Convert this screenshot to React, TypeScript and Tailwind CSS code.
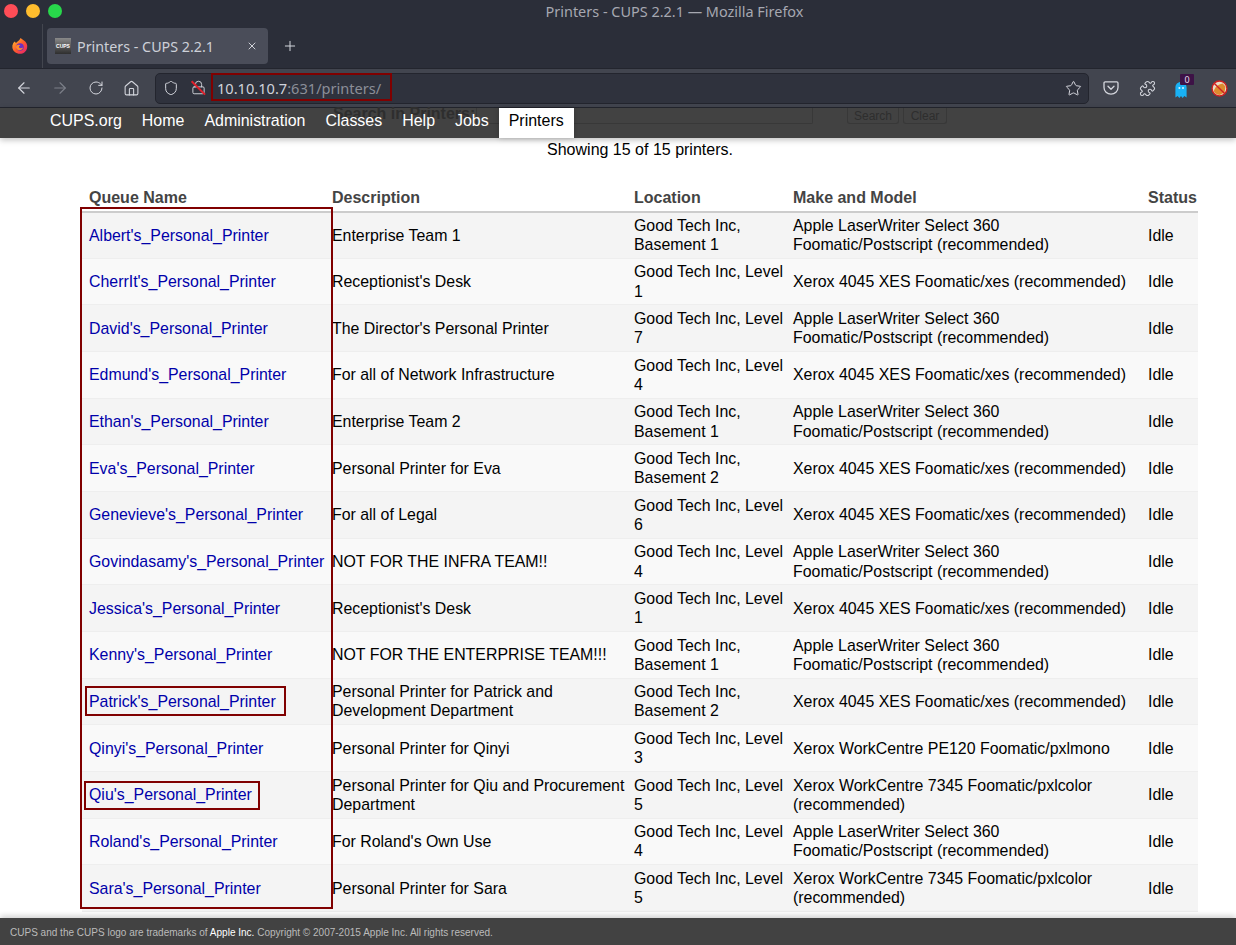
import React from "react"
import { ArrowLeft, ArrowRight, Home, Lock, Plus, Puzzle, RotateCw, Shield, Star, X } from "lucide-react"

type Printer = {
  name: string
  description: string
  location: string
  model: string
}

const APPLE = "Apple LaserWriter Select 360 Foomatic/Postscript (recommended)"
const XEROX = "Xerox 4045 XES Foomatic/xes (recommended)"
const WC7345 = "Xerox WorkCentre 7345 Foomatic/pxlcolor (recommended)"

const printers: Printer[] = [
  { name: "Albert's_Personal_Printer", description: "Enterprise Team 1", location: "Good Tech Inc, Basement 1", model: APPLE },
  { name: "CherrIt's_Personal_Printer", description: "Receptionist's Desk", location: "Good Tech Inc, Level 1", model: XEROX },
  { name: "David's_Personal_Printer", description: "The Director's Personal Printer", location: "Good Tech Inc, Level 7", model: APPLE },
  { name: "Edmund's_Personal_Printer", description: "For all of Network Infrastructure", location: "Good Tech Inc, Level 4", model: XEROX },
  { name: "Ethan's_Personal_Printer", description: "Enterprise Team 2", location: "Good Tech Inc, Basement 1", model: APPLE },
  { name: "Eva's_Personal_Printer", description: "Personal Printer for Eva", location: "Good Tech Inc, Basement 2", model: XEROX },
  { name: "Genevieve's_Personal_Printer", description: "For all of Legal", location: "Good Tech Inc, Level 6", model: XEROX },
  { name: "Govindasamy's_Personal_Printer", description: "NOT FOR THE INFRA TEAM!!", location: "Good Tech Inc, Level 4", model: APPLE },
  { name: "Jessica's_Personal_Printer", description: "Receptionist's Desk", location: "Good Tech Inc, Level 1", model: XEROX },
  { name: "Kenny's_Personal_Printer", description: "NOT FOR THE ENTERPRISE TEAM!!!", location: "Good Tech Inc, Basement 1", model: APPLE },
  { name: "Patrick's_Personal_Printer", description: "Personal Printer for Patrick and Development Department", location: "Good Tech Inc, Basement 2", model: XEROX },
  { name: "Qinyi's_Personal_Printer", description: "Personal Printer for Qinyi", location: "Good Tech Inc, Level 3", model: "Xerox WorkCentre PE120 Foomatic/pxlmono" },
  { name: "Qiu's_Personal_Printer", description: "Personal Printer for Qiu and Procurement Department", location: "Good Tech Inc, Level 5", model: WC7345 },
  { name: "Roland's_Personal_Printer", description: "For Roland's Own Use", location: "Good Tech Inc, Level 4", model: APPLE },
  { name: "Sara's_Personal_Printer", description: "Personal Printer for Sara", location: "Good Tech Inc, Level 5", model: WC7345 },
]

const navItems = ["CUPS.org", "Home", "Administration", "Classes", "Help", "Jobs"]

const FirefoxLogo = () => (
  <svg width="18" height="18" viewBox="0 0 18 18">
    <defs>
      <linearGradient id="ff" x1="0" y1="0" x2="1" y2="1">
        <stop offset="0" stopColor="#ffcb2e" />
        <stop offset="0.5" stopColor="#ff5a2c" />
        <stop offset="1" stopColor="#e3197a" />
      </linearGradient>
    </defs>
    <path d="M9.5 1C11 2.6 14.2 3.6 15.6 6.4 17 9.4 16.2 13 13.6 15.2 11 17.4 6.6 17.4 3.8 15 1.2 12.8.6 9.2 2.2 6.2 2.8 5.2 3.4 4.8 4 4.6 4.2 5.4 4.6 5.8 5 6 6 4.6 8.6 3.8 9.5 1Z" fill="url(#ff)" />
    <circle cx="9" cy="10" r="3.8" fill="#6b2fc4" />
    <path d="M5.4 8.4C7 7.4 8.6 7.6 9.4 8.4 8.2 8.8 7.8 9.4 8 10.2 8.4 11.4 10.4 11.6 12 10.6 11.4 13 8.6 14 6.6 12.8 5 11.8 4.6 9.8 5.4 8.4Z" fill="#ff8a2c" />
  </svg>
)

const CupsFavicon = () => (
  <div className="flex h-4 w-4 items-center justify-center bg-gradient-to-b from-[#8a8a8a] to-[#2f2f2f]">
    <span className="font-['Liberation_Sans',sans-serif] text-[5px] leading-none font-bold text-white">CUPS</span>
  </div>
)

const PocketIcon = () => (
  <svg width="16" height="16" viewBox="0 0 16 16" fill="none" stroke="#d4d6dd" strokeWidth="1.3">
    <path d="M2.2 1.8h11.6c.7 0 1.2.5 1.2 1.2v4.4c0 3.8-3.1 6.8-7 6.8s-7-3-7-6.8V3c0-.7.5-1.2 1.2-1.2Z" />
    <path d="M5 6.2l3 3 3-3" strokeLinecap="round" strokeLinejoin="round" />
  </svg>
)

const GhostAddon = () => (
  <div className="relative h-4 w-4">
    <svg width="16" height="18" viewBox="0 0 16 18" className="absolute top-[1px] left-[-2px]">
      <path d="M8 1c3.4 0 5.6 2.4 5.6 5.6V16.5l-2.2-1.4L9.6 17 8 15l-1.6 2-1.8-1.9-2.2 1.4V6.6C2.4 3.4 4.6 1 8 1Z" fill="#19b2f5" />
      <circle cx="6.4" cy="7" r="1" fill="#d6f2ff" />
      <circle cx="10" cy="7" r="1" fill="#d6f2ff" />
    </svg>
    <span className="absolute top-[-6px] left-[5px] flex h-[11px] w-[14px] items-center justify-center rounded-[1px] bg-[#3d1246] text-[9px] leading-none text-[#e6d8ea]">
      0
    </span>
  </div>
)

const BlockedAddon = () => (
  <svg width="17" height="17" viewBox="0 0 16 16">
    <circle cx="8" cy="8" r="7" fill="#e9dcc6" />
    <path d="M2.6 10.4C3.6 7 6.6 4.4 11 3.4l2.6 2.8-.8 5.4-4.6 2.4C5.4 14 3.4 12.6 2.6 10.4Z" fill="#dd8a2e" />
    <circle cx="8" cy="8" r="7" fill="none" stroke="#cf1f1f" strokeWidth="1.3" />
    <path d="M3.2 3.2l9.6 9.6" stroke="#cf1f1f" strokeWidth="1.3" />
  </svg>
)

const BrowserChrome = () => (
  <div className="font-['Noto_Sans',sans-serif]">
    {/* Title bar */}
    <div className="relative h-[24px] bg-[#2b2e39]">
      <div className="flex items-center gap-[8px] pt-[4px] pl-[4px]">
        <span className="h-[14px] w-[14px] rounded-full bg-[#ff4d57]" />
        <span className="h-[14px] w-[14px] rounded-full bg-[#ffbd2e]" />
        <span className="h-[14px] w-[14px] rounded-full bg-[#28d84b]" />
      </div>
      <div className="absolute inset-x-0 top-[2px] pl-[113px] text-center text-[14.45px] leading-[20px] text-[#a6a8b1]">
        Printers - CUPS 2.2.1 — Mozilla Firefox
      </div>
    </div>

    {/* Tabs */}
    <div className="flex h-[44px] bg-[#2b2e39]">
      <div className="flex w-[43px] items-center justify-center border-r border-[#43464f] pr-[2px]">
        <FirefoxLogo />
      </div>
      <div className="mt-[4px] ml-[4px] flex h-[36px] w-[221px] items-center self-start rounded-[4px] bg-[#4a4d59] pr-[8px] pl-[8px]">
        <CupsFavicon />
        <span className="ml-[6px] flex-1 pt-[2px] text-[14.3px] leading-none text-[#cdd0d8]">Printers - CUPS 2.2.1</span>
        <X size={12} className="mr-[2px] text-[#d0d2d9]" />
      </div>
      <div className="flex w-[44px] items-center justify-center self-start pt-[14px]">
        <Plus size={16} strokeWidth={1.5} className="text-[#d4d6dd]" />
      </div>
    </div>

    {/* Toolbar */}
    <div className="flex h-[40px] items-center border-y border-[#23252e] bg-[#42454f] pr-[8px] pl-[15px] text-[#d4d6dd]">
      <ArrowLeft size={18} strokeWidth={1.5} />
      <ArrowRight size={18} strokeWidth={1.5} className="ml-[18px] text-[#7d808a]" />
      <RotateCw size={16} strokeWidth={1.5} className="ml-[19px]" />
      <Home size={17} strokeWidth={1.5} className="ml-[19px]" />
      <div className="ml-[15px] flex h-[31px] w-[934px] items-center rounded-[5px] border border-[#23252e] bg-[#2f323d] pl-[7px]">
        <Shield size={16} strokeWidth={1.5} />
        <div className="relative ml-[12px] h-[16px] w-[16px]">
          <Lock size={15} strokeWidth={1.5} />
          <span className="absolute top-[7px] left-[-2px] h-[1.5px] w-[19px] rotate-45 bg-[#e0202c]" />
        </div>
        <span className="ml-[10px] flex-1 text-[14.6px] leading-none text-[#cfd3db]">
          10.10.10.7<span className="text-[#8b8e98]">:631/printers/</span>
        </span>
        <Star size={17} strokeWidth={1.4} className="mr-[6px]" />
      </div>
      <div className="ml-[14px]">
        <PocketIcon />
      </div>
      <Puzzle size={17} strokeWidth={1.5} className="ml-[20px]" />
      <div className="ml-[19px]">
        <GhostAddon />
      </div>
      <div className="ml-[20px]">
        <BlockedAddon />
      </div>
    </div>
  </div>
)

const CupsNav = () => (
  <div className="relative z-10 flex h-[30px] items-stretch bg-[#424242] pl-[40px] text-[15.96px] shadow-[0_2px_6px_rgba(0,0,0,0.25)]">
    {/* search form scrolled underneath the translucent header */}
    <div className="absolute top-[-5px] left-[333px] flex h-[22px] items-center text-[#2e2e2e]">
      <span className="text-[16px] font-bold whitespace-nowrap">Search in Printers:</span>
    </div>
    <div className="absolute top-0 left-[476px] h-[16px] w-[337px] rounded-b-[2px] border border-t-0 border-[#383838]" />
    <div className="absolute top-0 left-[847px] flex h-[16px] w-[52px] items-center justify-center rounded-b-[3px] border border-t-0 border-[#383838] text-[12px] text-[#2e2e2e]">
      Search
    </div>
    <div className="absolute top-0 left-[903px] flex h-[16px] w-[44px] items-center justify-center rounded-b-[3px] border border-t-0 border-[#383838] text-[12px] text-[#2e2e2e]">
      Clear
    </div>

    {navItems.map((item) => (
      <a key={item} className="relative flex items-center px-[10px] pb-[5px] text-white">
        {item}
      </a>
    ))}
    <a className="relative flex items-center bg-white px-[10px] pb-[5px] text-black shadow-[0_0_6px_rgba(0,0,0,0.2)]">
      Printers
    </a>
  </div>
)

const PrinterTable = () => (
  <table className="w-[1116px] table-fixed border-collapse text-[15.9px] leading-[19.2px] text-black">
    <colgroup>
      <col className="w-[250px]" />
      <col className="w-[302px]" />
      <col className="w-[159px]" />
      <col className="w-[355px]" />
      <col className="w-[50px]" />
    </colgroup>
    <thead>
      <tr className="h-[22px] border-b-2 border-[#cccccc] text-left text-[16px] font-bold text-[#444444]">
        <th className="pb-[3px] pl-[7px]">Queue Name</th>
        <th className="pb-[3px]">Description</th>
        <th className="pb-[3px]">Location</th>
        <th className="pb-[3px]">Make and Model</th>
        <th className="pb-[3px]">Status</th>
      </tr>
    </thead>
    <tbody>
      {printers.map((printer, i) => (
        <tr
          key={printer.name}
          className={`h-[46.67px] border-b border-[#eeeeee] ${i % 2 === 0 ? "bg-[#f4f4f4]" : "bg-[#f9f9f9]"}`}
        >
          <td className="pl-[7px] whitespace-nowrap">
            <a className="text-[#0000aa]">{printer.name}</a>
          </td>
          <td className="pr-[6px]">{printer.description}</td>
          <td className="pr-[8px]">{printer.location}</td>
          <td className="pr-[12px]">{printer.model}</td>
          <td>Idle</td>
        </tr>
      ))}
    </tbody>
  </table>
)

const Annotation = ({ className }: { className: string }) => (
  <div className={`pointer-events-none absolute z-20 border-2 border-[#800000] ${className}`} />
)

export default function App() {
  return (
    <div className="relative flex h-[945px] w-[1236px] flex-col overflow-hidden bg-white font-['Liberation_Sans',Arial,sans-serif]">
      <BrowserChrome />
      <CupsNav />

      <main className="ml-[82px] w-[1116px] flex-1">
        <p className="pt-[2px] pb-[29.4px] text-center text-[16px] leading-[19px] text-black">Showing 15 of 15 printers.</p>
        <PrinterTable />
      </main>

      <footer className="relative z-10 flex h-[27px] items-center bg-[#424242] pt-[3px] pl-[10px] text-[10.02px] text-[#bbbbbb] shadow-[0_-2px_6px_rgba(0,0,0,0.2)]">
        <span>
          CUPS and the CUPS logo are trademarks of <span className="text-white">Apple Inc.</span> Copyright © 2007-2015 Apple Inc. All rights reserved.
        </span>
      </footer>

      {/* red highlight boxes drawn on the screenshot */}
      <Annotation className="top-[73px] left-[211px] h-[28px] w-[181px]" />
      <Annotation className="top-[207px] left-[80px] h-[702px] w-[253px]" />
      <Annotation className="top-[686px] left-[85px] h-[30px] w-[201px]" />
      <Annotation className="top-[781px] left-[84px] h-[29px] w-[176px]" />
    </div>
  )
}
